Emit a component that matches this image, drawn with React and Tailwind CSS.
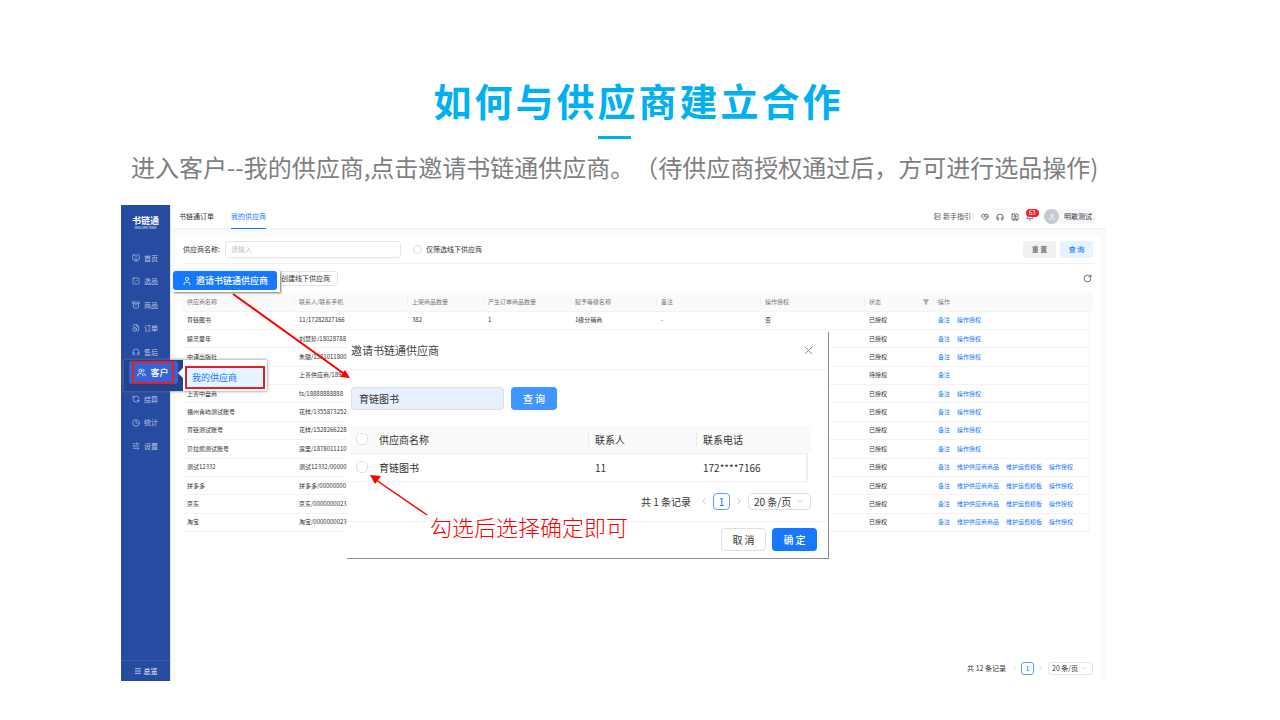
import {
  Archive,
  Bell,
  ChevronDown,
  ChevronLeft,
  ChevronRight,
  Clock3,
  FileClock,
  Filter,
  Headphones,
  HeartHandshake,
  Menu,
  MonitorCheck,
  RefreshCcw,
  RotateCw,
  Server,
  SlidersHorizontal,
  SquareCheck,
  SquareUser,
  User,
  Users,
  X,
} from "lucide-react";

const NAV = [
  { label: "首页", icon: MonitorCheck },
  { label: "选品", icon: SquareCheck },
  { label: "商品", icon: Archive },
  { label: "订单", icon: FileClock },
  { label: "售后", icon: Headphones },
  // slot of the open menu, drawn by Callouts
  null,
  { label: "结算", icon: RefreshCcw },
  { label: "统计", icon: Clock3 },
  { label: "设置", icon: SlidersHorizontal },
];

const BASIC = ["备注", "操作授权"];
const OFFLINE = ["备注", "维护供应商商品", "维护运费模板", "操作授权"];

const SUPPLIERS = [
  { name: "育链图书", contact: "11/17282827166", cells: ["382", "1", "1级分销商", "-", "否"], status: "已授权", actions: BASIC },
  { name: "鲸灵童年", contact: "刘慧珍/18028788", status: "已授权", actions: BASIC },
  { name: "中译出版社", contact: "朱璐/1581011800", status: "已授权", actions: BASIC },
  { name: "", contact: "上善供应商/1891", status: "待授权", actions: ["备注"] },
  { name: "上善中盘商", contact: "ts/18888888888", status: "已授权", actions: BASIC },
  { name: "福州青屿测试账号", contact: "花样/1355873252", status: "已授权", actions: BASIC },
  { name: "育链测试账号", contact: "花样/1528266228", status: "已授权", actions: BASIC },
  { name: "贝拉熊测试账号", contact: "露里/1878011110", status: "已授权", actions: BASIC },
  { name: "测试12332", contact: "测试12332/00000", status: "已授权", actions: OFFLINE },
  { name: "拼多多", contact: "拼多多/00000000", status: "已授权", actions: OFFLINE },
  { name: "京东", contact: "京东/0000000023", status: "已授权", actions: OFFLINE },
  { name: "淘宝", contact: "淘宝/0000000023", status: "已授权", actions: OFFLINE },
];

const HEADERS = ["供应商名称", "联系人/联系手机", "上架商品数量", "产生订单商品数量", "赋予等级名称", "备注", "操作授权"];

function Sidebar() {
  return (
    <aside className="flex w-[50px] shrink-0 flex-col border-r border-[#e6e9f5] bg-[#284ba2] text-[#b9c6e6]">
      <div className="flex h-[41px] flex-col items-center pt-[10px] text-white">
        <span className="text-[9px] leading-[11px] font-bold">书链通</span>
        <span className="text-[3px] leading-[4px]">SHU LIAN TONG</span>
      </div>
      <nav className="flex h-[212px] flex-col">
        {NAV.map((item, i) =>
          item ? (
            <a key={i} href="#" className="flex flex-1 items-center gap-1 pl-[11px] text-[7px]">
              <item.icon className="size-[8px]" />
              {item.label}
            </a>
          ) : (
            <span key={i} className="flex-1" />
          )
        )}
      </nav>
      <button className="mt-auto flex h-[21px] items-center justify-center gap-[2px] border-t border-[#3c5cab] text-[7px] text-white">
        <Menu className="size-[8px]" />
        总览
      </button>
    </aside>
  );
}

function TopBar() {
  return (
    <header className="flex h-[24px] items-center border-b border-[#f3f3f3] bg-white pr-[9px] pl-[8px] text-[7px] text-[#333]">
      <a href="#" className="mr-[17px]">书链通订单</a>
      <a href="#" className="flex h-[24px] items-center border-b border-[#1677ff] text-[#1677ff]">我的供应商</a>
      <div className="ml-auto flex items-center gap-[7px]">
        <a href="#" className="flex items-center gap-[2px] border-r border-[#f0f0f0] pr-[2px] text-[#555]">
          <Server className="size-[7px]" />
          新手指引
        </a>
        <HeartHandshake className="size-[8px]" />
        <Headphones className="size-[8px]" />
        <SquareUser className="size-[8px]" />
        <span className="relative">
          <Bell className="size-[8px]" />
          <span className="absolute -top-[4px] left-0 rounded-full bg-[#f5222d] px-[3px] text-[6px] leading-[8px] text-white">63</span>
        </span>
        <button className="ml-[3px] flex items-center gap-[5px] rounded-full bg-[#f6f7f9] pr-[5px]">
          <span className="flex size-[15px] items-center justify-center rounded-full bg-[#c5cad2] text-white">
            <User className="size-[8px]" />
          </span>
          明敢测试
        </button>
      </div>
    </header>
  );
}

function SearchBar() {
  return (
    <form className="flex h-[29px] items-center border-b border-[#f0f0f0] text-[7px] text-[#333]">
      <label htmlFor="supplier" className="w-[42px]">供应商名称:</label>
      <input
        id="supplier"
        placeholder="请输入"
        className="h-[17px] w-[176px] rounded-[3px] border border-[#e6e6e6] px-[5px] placeholder:text-[#bfbfbf]"
      />
      <label className="ml-[12px] flex items-center gap-[4px]">
        <input type="checkbox" className="size-[9px] appearance-none rounded-[4px] border border-[#e0e0e0]" />
        仅筛选线下供应商
      </label>
      <button type="button" className="ml-auto h-[17px] w-[33px] rounded-[3px] bg-[#f0f1f3] font-medium text-[#666]">重 置</button>
      <button type="button" className="ml-[4px] h-[17px] w-[33px] rounded-[3px] bg-[#e6f4ff] font-medium text-[#1677ff]">查 询</button>
    </form>
  );
}

function SupplierTable() {
  return (
    <table className="h-[239px] w-full table-fixed text-left text-[6px] leading-[8px] whitespace-nowrap text-[#333]">
      <colgroup>
        <col className="w-[112px]" />
        <col className="w-[113px]" />
        <col className="w-[76px]" />
        <col className="w-[87px]" />
        <col className="w-[86px]" />
        <col className="w-[104px]" />
        <col className="w-[104px]" />
        <col className="w-[69px]" />
        <col />
        <col className="w-[3px]" />
      </colgroup>
      <thead className="bg-[#fafafa] text-[#777]">
        <tr className="h-[18px]">
          {HEADERS.map((h) => (
            <th key={h} className="p-0 font-normal">
              <span className="block border-r border-[#f0f0f0] pl-1">{h}</span>
            </th>
          ))}
          <th className="p-0 font-normal">
            <span className="flex items-center justify-between border-r border-[#f0f0f0] pr-[4px] pl-1">
              状态
              <Filter className="size-[6px] fill-[#bbb]" />
            </span>
          </th>
          <th colSpan={2} className="p-0 pl-1 font-normal">操作</th>
        </tr>
      </thead>
      <tbody>
        {SUPPLIERS.map((s) => (
          <tr key={s.contact}>
            <td className="border-t border-b border-[#f3f3f3] p-0 pl-1">{s.name}</td>
            <td className="border-t border-b border-[#f3f3f3] p-0 pl-1">{s.contact}</td>
            {(s.cells ?? ["", "", "", "", ""]).map((c, i) => (
              <td key={i} className="border-t border-b border-[#f3f3f3] p-0 pl-1">{c}</td>
            ))}
            <td className="border-t border-b border-[#f3f3f3] p-0 pl-1">{s.status}</td>
            <td className="border border-l-0 border-[#f3f3f3] p-0 pl-1">
              <span className="flex gap-[7px] text-[#1677ff]">
                {s.actions.map((a) => (
                  <a key={a} href="#">{a}</a>
                ))}
              </span>
            </td>
            <td className="p-0" />
          </tr>
        ))}
      </tbody>
    </table>
  );
}

function SmallPager() {
  return (
    <div className="mt-auto mb-[6px] flex h-[13px] items-center justify-end text-[7px] text-[#333]">
      <span className="mr-[5px]">共 12 条记录</span>
      <ChevronLeft className="size-[7px] text-[#bbb]" />
      <button className="mx-[3px] h-[13px] w-[13px] rounded-[3px] border border-[#5c9dff] leading-[11px] text-[#1677ff]">1</button>
      <ChevronRight className="size-[7px] text-[#bbb]" />
      <span className="relative ml-[4px] flex items-center">
        <select aria-label="每页条数" className="h-[13px] w-[45px] appearance-none rounded-[3px] border border-[#e6e6e6] pl-[3px] leading-[11px]">
          <option>20 条/页</option>
        </select>
        <ChevronDown className="absolute right-[5px] size-[7px] text-[#bbb]" />
      </span>
    </div>
  );
}

function InviteModal() {
  return (
    <section
      role="dialog"
      aria-label="邀请书链通供应商"
      className="absolute top-[127px] left-[226px] w-[482px] border-r border-b border-[#8c8c8c] bg-white text-[10px] text-[#333]"
    >
      <header className="flex h-[38px] items-center justify-between border-b border-[#f0f0f0] pr-[13px] pl-1">
        <h2 className="text-[11px] text-[#444]">邀请书链通供应商</h2>
        <button aria-label="关闭">
          <X className="size-[13px] text-[#777]" strokeWidth={1.5} />
        </button>
      </header>
      <div className="pr-[17px] pl-1">
        <form className="flex gap-[7px] pt-[17px]">
          <input
            aria-label="供应商"
            defaultValue="育链图书"
            className="h-[23px] w-[153px] rounded-[4px] border border-[#dadce6] bg-[#e8f0fe] px-[7px]"
          />
          <button type="button" className="w-[46px] rounded-[4px] bg-[#4096ff] font-medium text-white">查 询</button>
        </form>
        <table className="mt-[16px] w-full table-fixed text-left">
          <colgroup>
            <col className="w-[28px]" />
            <col />
            <col className="w-[108px]" />
            <col className="w-[110px]" />
            <col className="w-[4px]" />
          </colgroup>
          <thead className="bg-[#fafafa]">
            <tr className="h-[27px]">
              <th className="p-0 pl-[5px]">
                <input type="checkbox" aria-label="全选" className="block size-[12px] appearance-none rounded-[5px] border border-[#e0e0e0] bg-white" />
              </th>
              <th className="p-0 font-normal">
                <span className="block border-r border-[#ececec]">供应商名称</span>
              </th>
              <th className="p-0 font-normal">
                <span className="block border-r border-[#ececec] pl-[6px]">联系人</span>
              </th>
              <th colSpan={2} className="p-0 pl-[6px] font-normal">联系电话</th>
            </tr>
          </thead>
          <tbody>
            <tr className="h-[28px]">
              <td className="border-t border-b border-[#f0f0f0] p-0 pl-[5px]">
                <input type="checkbox" aria-label="选择育链图书" className="block size-[12px] appearance-none rounded-[5px] border border-[#e0e0e0]" />
              </td>
              <td className="border-t border-b border-[#f0f0f0] p-0">育链图书</td>
              <td className="border-t border-b border-[#f0f0f0] p-0 pl-[6px]">11</td>
              <td className="border border-r-2 border-l-0 border-[#f0f0f0] p-0 pl-[6px]">172****7166</td>
              <td className="p-0" />
            </tr>
          </tbody>
        </table>
        <div className="flex h-[39px] items-center justify-end">
          <span className="mr-[8px]">共 1 条记录</span>
          <ChevronLeft className="size-[10px] text-[#bbb]" />
          <button className="mx-[4px] h-[17px] w-[17px] rounded-[4px] border border-[#5c9dff] leading-[15px] text-[#1677ff]">1</button>
          <ChevronRight className="size-[10px] text-[#bbb]" />
          <span className="relative ml-[4px] flex items-center">
            <select aria-label="每页记录数" className="h-[17px] w-[63px] appearance-none rounded-[4px] border border-[#e0e0e0] pl-[5px] leading-[15px]">
              <option>20 条/页</option>
            </select>
            <ChevronDown className="absolute right-[6px] size-[10px] text-[#bbb]" />
          </span>
        </div>
      </div>
      <footer className="flex h-[37px] items-center justify-end gap-[6px] border-t border-[#f0f0f0] pr-[11px]">
        <button className="h-[23px] w-[45px] rounded-[4px] border border-[#e0e0e0]">取 消</button>
        <button className="h-[23px] w-[45px] rounded-[4px] bg-[#1677ff] font-medium text-white">确 定</button>
      </footer>
    </section>
  );
}

// enlarged, framed copies of the controls to click
function Callouts() {
  return (
    <>
      <div className="absolute top-[66px] left-[52px] bg-white pr-[3px] pb-[2px] shadow-[1px_1px_2px_#777]">
        <button className="flex h-[19px] w-[104px] items-center justify-center gap-[4px] rounded-[3px] bg-[#1677ff] text-[9px] font-medium text-white">
          <User className="size-[10px]" />
          邀请书链通供应商
        </button>
      </div>
      <div className="absolute top-[155px] left-[3px] flex h-[31px] w-[143px] bg-white shadow-[0_0_3px_#777]">
        <div className="flex w-[59px] items-start bg-[#23428f] pt-[1px] pl-[5px]">
          <div className="flex h-[23px] w-[49px] rounded-[3px] bg-[#3a63d2] pl-[3px]">
            <a href="#" className="flex w-[42px] items-center justify-center gap-[4px] border-2 border-[#e0202c] text-[9px] font-medium text-white">
              <Users className="size-[9px]" />
              客户
            </a>
          </div>
          <svg viewBox="0 0 5 10" className="mt-[7px] h-[10px] w-[5px]">
            <path d="M5 0 0 5l5 5z" fill="#fff" />
          </svg>
        </div>
        <a href="#" className="mt-[6px] ml-[2px] flex h-[23px] w-[80px] items-center border-2 border-[#e0202c] bg-[#e6f4ff] pl-[5px] text-[9px] text-[#1677ff]">
          我的供应商
        </a>
      </div>
      <svg viewBox="0 0 520 340" className="pointer-events-none absolute top-0 left-0 h-[340px] w-[520px]" stroke="#f00" fill="#f00">
        <path d="M112 89 222 168" strokeWidth="2" />
        <path d="M229 173 219 172 224 165z" stroke="none" />
        <path d="M306 310 255 275" strokeWidth="1.5" />
        <path d="M249 270 260 271 254 279z" stroke="none" />
      </svg>
      <p className="absolute top-[306px] left-[309px] text-[22px] leading-[30px] font-light whitespace-nowrap text-[#f00]">
        勾选后选择确定即可
      </p>
    </>
  );
}

export default function App() {
  return (
    <main className="min-h-screen bg-white pt-[76px] pb-[39px] font-['Noto_Sans_CJK_SC',sans-serif]">
      <h1 className="pr-[3px] text-center text-[38px] leading-[48px] font-bold tracking-[3px] text-[#00b0f0]">如何与供应商建立合作</h1>
      <div className="mx-auto mt-[12px] flex w-[84px] justify-start">
        <div className="h-[3px] w-[33px] bg-[#00b0f0]" />
      </div>
      <p className="mt-[10px] pl-[131px] text-[24px] leading-[36px] whitespace-nowrap text-[#7f7f7f] [text-spacing-trim:space-all]">
        进入客户--我的供应商,点击邀请书链通供应商。（待供应商授权通过后，方可进行选品操作)
      </p>
      <div className="relative mt-[20px] mr-[174px] ml-[121px] flex min-h-[476px]">
        <Sidebar />
        <div className="flex min-w-0 flex-1 flex-col bg-[#fafafa]">
          <TopBar />
          <div className="mt-[6px] mr-[6px] ml-[5px] flex flex-1 flex-col bg-white px-[7px]">
            <SearchBar />
            <div className="flex h-[29px] items-center justify-between">
              <button className="ml-[51px] h-[15px] w-[104px] rounded-[3px] border border-[#e6e6e6] pr-[7px] text-right text-[7px] text-[#333]">
                创建线下供应商
              </button>
              <button aria-label="刷新" className="mr-[1px]">
                <RotateCw className="size-[9px] text-[#444]" />
              </button>
            </div>
            <SupplierTable />
            <SmallPager />
          </div>
        </div>
        <InviteModal />
        <Callouts />
      </div>
    </main>
  );
}
